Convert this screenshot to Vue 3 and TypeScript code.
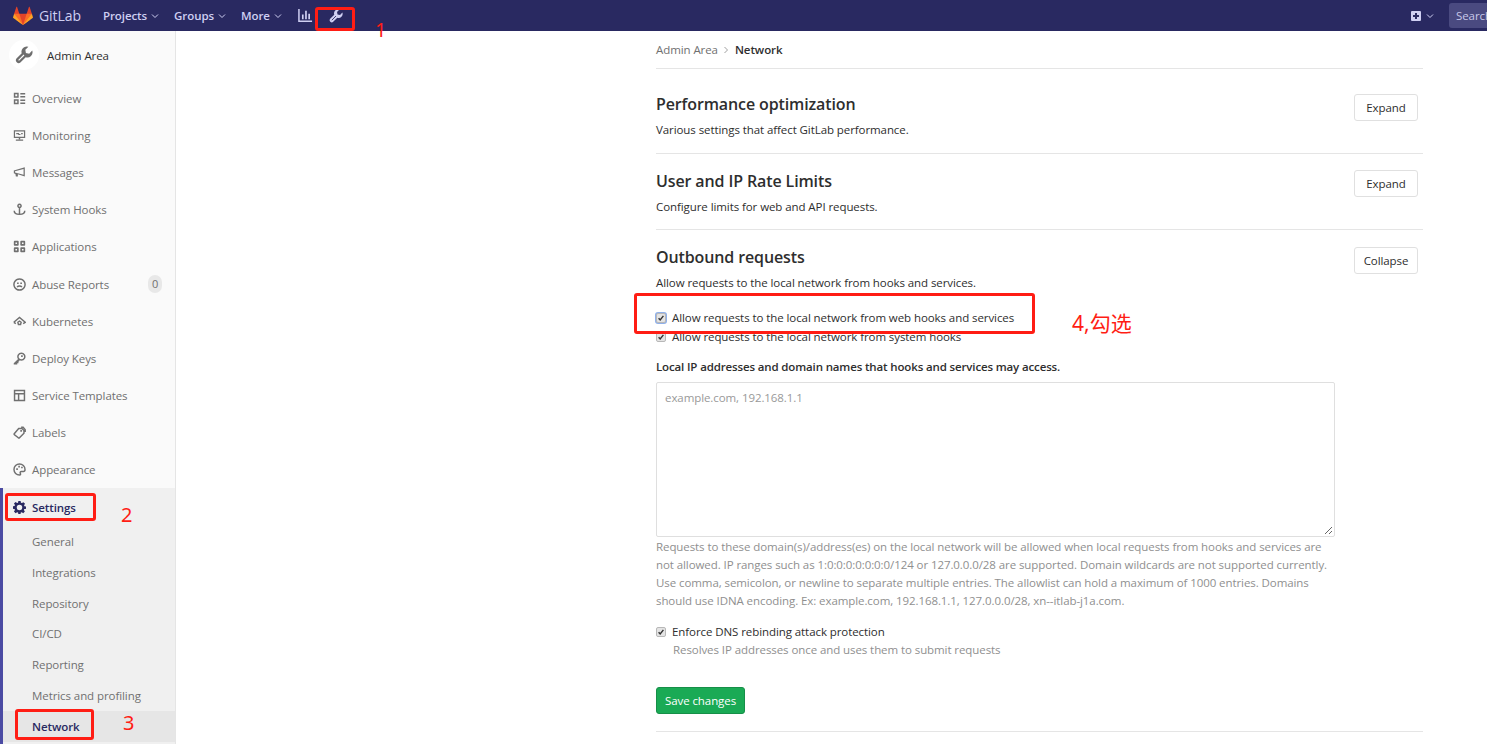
<template>
  <div class="page">
    <header class="navbar">
      <svg class="logo" viewBox="0 0 36 36">
        <path fill="#e24329" d="M2 14l9.38 9v-9l-4-12.28c-.205-.632-1.176-.632-1.38 0z" />
        <path fill="#e24329" d="M34 14l-9.38 9v-9l4-12.28c.205-.632 1.176-.632 1.38 0z" />
        <path fill="#e24329" d="M18,34.38 3,14 33,14 Z" />
        <path fill="#fc6d26" d="M18,34.38 11.38,14 2,14 6,25Z" />
        <path fill="#fc6d26" d="M18,34.38 24.62,14 34,14 30,25Z" />
        <path fill="#fca326" d="M2 14L.1 20.16c-.18.565 0 1.2.5 1.56l17.42 12.66z" />
        <path fill="#fca326" d="M34 14l1.9 6.16c.18.565 0 1.2-.5 1.56L18 34.38z" />
      </svg>
      <span class="brand">GitLab</span>
      <a v-for="item in topLinks" :key="item" class="top-link">
        {{ item }}
        <svg class="chevron" viewBox="0 0 8 6"><path d="M1 1.5l3 3 3-3" /></svg>
      </a>
      <svg class="nav-icon chart" viewBox="0 0 16 16">
        <path d="M1 1v13.2h14" fill="none" stroke="currentColor" stroke-width="1.6" />
        <path d="M4.2 7h1.8v5H4.2zM7.6 3h1.8v9H7.6zM11 6h1.8v6H11z" fill="currentColor" />
      </svg>
      <svg class="nav-icon wrench" viewBox="0 0 16 16">
        <path :d="wrench" fill="currentColor" />
        <path d="M3.2 12.800L8 8" stroke="#292961" stroke-width="1" />
      </svg>
      <div class="nav-right">
        <svg class="plus" viewBox="0 0 12 12">
          <path
            fill-rule="evenodd"
            fill="currentColor"
            d="M2 1h8a1 1 0 0 1 1 1v8a1 1 0 0 1-1 1H2a1 1 0 0 1-1-1V2a1 1 0 0 1 1-1zM5 3v2H3v2h2v2h2V7h2V5H7V3z"
          />
        </svg>
        <svg class="chevron" viewBox="0 0 8 6"><path d="M1 1.5l3 3 3-3" /></svg>
        <div class="search">Search or jump to...</div>
      </div>
    </header>

    <div class="layout">
      <aside class="sidebar">
        <div class="context">
          <span class="avatar">
            <svg viewBox="0 0 16 16">
              <path :d="wrench" fill="#6e6e6e" />
              <path d="M3.2 12.800L8 8" stroke="#fff" stroke-width="1" />
            </svg>
          </span>
          <span class="context-name">Admin Area</span>
        </div>
        <ul class="menu">
          <li v-for="item in menu" :key="item.label" class="menu-item">
            <svg class="menu-icon" viewBox="0 0 16 16">
              <path v-if="item.fill" :d="item.fill" fill="currentColor" fill-rule="evenodd" />
              <path v-if="item.stroke" :d="item.stroke" fill="none" stroke="currentColor" stroke-width="1.8" />
            </svg>
            <span>{{ item.label }}</span>
            <span v-if="item.badge" class="badge">{{ item.badge }}</span>
          </li>
        </ul>
        <div class="active-group">
          <div class="menu-item active-head">
            <svg class="menu-icon" viewBox="0 0 16 16">
              <path :d="gear" fill="currentColor" fill-rule="evenodd" />
            </svg>
            <span>Settings</span>
          </div>
          <ul class="submenu">
            <li v-for="sub in subMenu" :key="sub" :class="{ current: sub === 'Network' }">{{ sub }}</li>
          </ul>
        </div>
      </aside>

      <main class="content">
        <nav class="crumbs">
          <span>Admin Area</span>
          <svg class="crumb-sep" viewBox="0 0 6 8"><path d="M1.5 1l3 3-3 3" /></svg>
          <b>Network</b>
        </nav>

        <section v-for="s in collapsed" :key="s.title" class="block closed">
          <div class="block-head">
            <div>
              <h4>{{ s.title }}</h4>
              <p>{{ s.text }}</p>
            </div>
            <button class="btn">Expand</button>
          </div>
        </section>

        <section class="block open">
          <div class="block-head">
            <div>
              <h4>Outbound requests</h4>
              <p>Allow requests to the local network from hooks and services.</p>
            </div>
            <button class="btn">Collapse</button>
          </div>

          <label class="check first">
            <span class="box focus"><svg viewBox="0 0 10 10"><path d="M2 5.2l2 2.2 4-5" /></svg></span>
            Allow requests to the local network from web hooks and services
          </label>
          <label class="check second">
            <span class="box"><svg viewBox="0 0 10 10"><path d="M2 5.2l2 2.2 4-5" /></svg></span>
            Allow requests to the local network from system hooks
          </label>

          <div class="field-label">Local IP addresses and domain names that hooks and services may access.</div>
          <div class="textarea">
            example.com, 192.168.1.1
            <svg class="grip" viewBox="0 0 10 10"><path d="M9 2L2 9M9 6L6 9" /></svg>
          </div>
          <div class="help">
            <div v-for="line in helpLines" :key="line">{{ line }}</div>
          </div>

          <label class="check dns">
            <span class="box"><svg viewBox="0 0 10 10"><path d="M2 5.2l2 2.2 4-5" /></svg></span>
            Enforce DNS rebinding attack protection
          </label>
          <div class="dns-help">Resolves IP addresses once and uses them to submit requests</div>

          <button class="save">Save changes</button>
        </section>
      </main>
    </div>

    <!-- red marks added on top of the screenshot -->
    <i class="mark m1"></i>
    <i class="mark m2"></i>
    <i class="mark m3"></i>
    <i class="mark m4"></i>
    <span class="note n1">1</span>
    <span class="note n2">2</span>
    <span class="note n3">3</span>
    <span class="note n4">4,勾选</span>
  </div>
</template>

<script setup lang="ts">
interface MenuItem {
  label: string
  fill?: string
  stroke?: string
  badge?: string
}

const topLinks = ['Projects', 'Groups', 'More']

const wrench =
  'M15.3 4.1l-2.7 2.7-2.9-.5-.5-2.9L11.9.7A4.6 4.6 0 0 0 6 6.5l-4.7 4.7a2.5 2.5 0 0 0 3.5 3.5L9.5 10a4.6 4.6 0 0 0 5.8-5.9z'

const gear =
  'M6.6 0h2.8l.4 2.1 1.2.5L12.8 1.4l2 2-1.2 1.8.5 1.2 1.9.4v2.8l-2.1.4-.5 1.2 1.2 1.8-2 2-1.8-1.2-1.2.5-.4 2H6.6l-.4-2-1.2-.5-1.8 1.2-2-2 1.2-1.8-.5-1.2L0 9.4V6.6l1.9-.4.5-1.2-1.2-1.8 2-2L5 2.6l1.2-.5zM8 4.600a3.400 3.400 0 1 0 0 6.800 3.400 3.400 0 0 0 0-6.800z'

const menu: MenuItem[] = [
  {
    label: 'Overview',
    fill: 'M1 1h6v6H1zM2.800 2.800v2.400h2.400V2.800zM1 9h6v6H1zM2.800 10.800v2.400h2.400v-2.400zM9 1.200h6V3H9zM9 5h6v1.800H9zM9 9.200h6V11H9zM9 13h6v1.800H9z',
  },
  {
    label: 'Monitoring',
    fill: 'M1 1.500h14v9.500H1zM2.500 3v6.500h11V3zM4 5h3.500v1H10V5h2v1.500H9v1H6.500v-1H4zM3.500 13h9v1.500h-9z',
    stroke: 'M8 11v2',
  },
  {
    label: 'Messages',
    fill: 'M14.500 1.500V13L6 10v3H3.500L3 9.700 1 9V5.500zM13 3.600L2.500 6.600v1.300L13 10.900z',
  },
  {
    label: 'System Hooks',
    stroke: 'M8 5.500V14M1.500 9.500c0 3 2.500 4.500 6.500 4.500s6.500-1.500 6.500-4.500M8 1.500a2 2 0 1 0 .01 0',
  },
  {
    label: 'Applications',
    fill: 'M2 1h4a1 1 0 0 1 1 1v4a1 1 0 0 1-1 1H2a1 1 0 0 1-1-1V2a1 1 0 0 1 1-1zM3 3v2h2V3zM10 1h4a1 1 0 0 1 1 1v4a1 1 0 0 1-1 1h-4a1 1 0 0 1-1-1V2a1 1 0 0 1 1-1zM11 3v2h2V3zM2 9h4a1 1 0 0 1 1 1v4a1 1 0 0 1-1 1H2a1 1 0 0 1-1-1v-4a1 1 0 0 1 1-1zM3 11v2h2v-2zM10 9h4a1 1 0 0 1 1 1v4a1 1 0 0 1-1 1h-4a1 1 0 0 1-1-1v-4a1 1 0 0 1 1-1zM11 11v2h2v-2z',
  },
  {
    label: 'Abuse Reports',
    stroke: 'M8 1.200a6.800 6.800 0 1 0 .01 0M5 11c1.500-1.500 4.500-1.500 6 0',
    fill: 'M5 5.500h2v2H5zM9 5.500h2v2H9z',
    badge: '0',
  },
  {
    label: 'Kubernetes',
    stroke: 'M1 9l7-6 7 6-2.500 1.500M3.500 10.500L1 9',
    fill: 'M8 6.500l3 2.200-1 3.800H6l-1-3.800zM8 8.500a1 1 0 1 0 .01 0z',
  },
  {
    label: 'Deploy Keys',
    stroke: 'M10.300 1.500a4.200 4.200 0 1 0 .01 0M7.200 8.800L1.800 14.200v.3h2.500v-1.500h1.500v-1.500l1.700-1.500',
    fill: 'M10 4h2v2h-2z',
  },
  {
    label: 'Service Templates',
    fill: 'M1 1h14v14H1zM2.800 2.800v2.200h10.400V2.800zM2.800 6.800v6.400H6V6.800zM7.800 6.800v6.400h5.400V6.800z',
  },
  {
    label: 'Labels',
    stroke: 'M1.500 9.500L7 3h4l2.500 2.500v3.500L8 14.500a1 1 0 0 1-1.500 0l-5-4a1 1 0 0 1 0-1zM10 1.500h2.500l2.500 3v3',
    fill: 'M9 5h2v2H9z',
  },
  {
    label: 'Appearance',
    stroke: 'M8 1.200a6.800 6.800 0 1 0 0 13.600c1.500 0 1.500-1.200 1-2-.6-1 0-2.300 1.300-2.300h2.500c1.300 0 2-1 2-2.500 0-4-3.200-6.800-6.800-6.800z',
    fill: 'M4 6.500h2v2H4zM6.500 3.500h2v2h-2zM10 4.500h2v2h-2z',
  },
]

const subMenu = ['General', 'Integrations', 'Repository', 'CI/CD', 'Reporting', 'Metrics and profiling', 'Network']

const collapsed = [
  { title: 'Performance optimization', text: 'Various settings that affect GitLab performance.' },
  { title: 'User and IP Rate Limits', text: 'Configure limits for web and API requests.' },
]

const helpLines = [
  'Requests to these domain(s)/address(es) on the local network will be allowed when local requests from hooks and services are',
  'not allowed. IP ranges such as 1:0:0:0:0:0:0:0/124 or 127.0.0.0/28 are supported. Domain wildcards are not supported currently.',
  'Use comma, semicolon, or newline to separate multiple entries. The allowlist can hold a maximum of 1000 entries. Domains',
  'should use IDNA encoding. Ex: example.com, 192.168.1.1, 127.0.0.0/28, xn--itlab-j1a.com.',
]
</script>

<style>
html,
body {
  margin: 0;
  background: #fff;
  overflow: hidden;
}
</style>

<style scoped>
.page {
  position: relative;
  width: 1487px;
  height: 744px;
  overflow: hidden;
  font-family: "Open Sans", "Noto Sans CJK SC", sans-serif;
  font-size: 11.5px;
  letter-spacing: -0.08px;
  color: #2e2e2e;
}

/* top bar */
.navbar {
  height: 31px;
  background: #292961;
  color: #cfcff2;
  display: flex;
  align-items: center;
  padding-left: 13px;
  box-sizing: border-box;
}
.logo {
  width: 20px;
  height: 20px;
}
.brand {
  margin-left: 6px;
  width: 64px;
  font-size: 14px;
}
.top-link {
  display: flex;
  align-items: center;
  font-weight: 600;
  margin-right: 15px;
}
.chevron {
  width: 8px;
  height: 6px;
  margin-left: 4px;
  fill: none;
  stroke: #cfcff2;
  stroke-width: 1;
}
.nav-icon {
  width: 15px;
  height: 15px;
}
.chart {
  margin-left: 1px;
}
.wrench {
  width: 14px;
  height: 14px;
  margin-left: 16px;
}
.nav-right {
  margin-left: auto;
  display: flex;
  align-items: center;
}
.plus {
  width: 12px;
  height: 12px;
}
.search {
  margin-left: 15px;
  width: 31px;
  height: 25px;
  line-height: 25px;
  padding-left: 7px;
  background: #4a4a80;
  border-radius: 3px 0 0 3px;
  white-space: nowrap;
  overflow: hidden;
  color: #c8c8e8;
}

.layout {
  display: flex;
  height: 713px;
}

/* left menu */
.sidebar {
  width: 176px;
  flex: none;
  background: #fafafa;
  border-right: 1px solid #e5e5e5;
  box-sizing: border-box;
  color: #707070;
}
.context {
  height: 48px;
  display: flex;
  align-items: center;
  padding-left: 9px;
  color: #2e2e2e;
}
.avatar {
  width: 30px;
  height: 30px;
  border-radius: 50%;
  background: #fff;
  display: flex;
  align-items: center;
  justify-content: center;
  margin-right: 8px;
}
.avatar svg {
  width: 18px;
  height: 18px;
}
.context-name {
  font-weight: 500;
}
.menu {
  list-style: none;
  margin: 0;
  padding: 0;
}
.menu-item {
  height: 37.2px;
  display: flex;
  align-items: center;
  padding: 1px 13px 0;
  box-sizing: border-box;
}
.menu-icon {
  width: 13px;
  height: 13px;
  margin-right: 6px;
  flex: none;
}
.badge {
  margin-left: auto;
  width: 14px;
  height: 18px;
  line-height: 18px;
  text-align: center;
  background: #e8e8e8;
  border-radius: 7px;
  font-size: 11px;
}
.active-group {
  background: #f0f0f0;
  border-left: 3px solid #4b4ba3;
  padding-bottom: 4px;
}
.active-head {
  height: 38px;
  padding-left: 10px;
  color: #292961;
  font-weight: 600;
}
.submenu {
  list-style: none;
  margin: 0;
  padding: 0;
}
.submenu li {
  height: 30.8px;
  line-height: 32px;
  padding-left: 29px;
}
.submenu li.current {
  background: #e6e6e6;
  color: #292961;
  font-weight: 600;
}

/* main column */
.content {
  width: 767px;
  margin-left: 480px;
}
.crumbs {
  height: 37px;
  border-bottom: 1px solid #e5e5e5;
  display: flex;
  align-items: center;
  color: #707070;
}
.crumb-sep {
  width: 6px;
  height: 8px;
  margin: 0 6px 0 5px;
  fill: none;
  stroke: #a0a0a0;
}
.crumbs b {
  color: #2e2e2e;
  font-weight: 600;
}
.block {
  border-bottom: 1px solid #e5e5e5;
  box-sizing: border-box;
}
.closed {
  height: 76px;
  padding-top: 16px;
}
.closed + .closed .block-head > div {
  padding-top: 1px;
}
.closed:first-of-type {
  height: 85px;
  padding-top: 25px;
}
.open {
  height: 502px;
  padding-top: 17px;
}
.block-head {
  display: flex;
  justify-content: space-between;
  align-items: flex-start;
}
h4 {
  margin: -1px 0 0;
  font-size: 16px;
  line-height: 22px;
  font-weight: 600;
  letter-spacing: -0.12px;
  color: #2e2e2e;
}
.block-head p {
  margin: 7px 0 0;
  line-height: 16px;
}
.btn {
  width: 64px;
  height: 27px;
  margin-right: 5px;
  padding: 0;
  background: #fff;
  border: 1px solid #e0e0e0;
  border-radius: 3px;
  font: inherit;
  letter-spacing: inherit;
  color: #2e2e2e;
}
.check {
  display: flex;
  align-items: center;
  line-height: 16px;
  height: 18px;
}
.box {
  width: 8px;
  height: 8px;
  margin-right: 6px;
  background: #e4e4e4;
  border: 1px solid #b8b8b8;
  border-radius: 2px;
  display: flex;
}
.box svg {
  fill: none;
  stroke: #333;
  stroke-width: 1.8;
}
.box.focus {
  box-shadow: 0 0 0 1px #8fb0ea;
}
.first {
  margin-top: 18px;
}
.second {
  margin-top: 1px;
}
.field-label {
  margin-top: 12px;
  line-height: 18px;
  font-weight: 600;
  letter-spacing: -0.14px;
}
.textarea {
  position: relative;
  width: 679px;
  height: 155px;
  margin-top: 6px;
  padding: 7px 8px;
  border: 1px solid #dfdfdf;
  border-radius: 2px;
  box-sizing: border-box;
  color: #999;
}
.grip {
  position: absolute;
  right: 1px;
  bottom: 1px;
  width: 10px;
  height: 10px;
  fill: none;
  stroke: #666;
}
.help {
  margin-top: 1px;
  line-height: 18px;
  color: #8f8f8f;
  white-space: nowrap;
}
.dns {
  margin-top: 13px;
}
.dns-help {
  margin-left: 17px;
  line-height: 18px;
  color: #8f8f8f;
}
.save {
  display: block;
  width: 89px;
  height: 27px;
  margin-top: 28px;
  padding: 0;
  background: #1aaa55;
  border: 1px solid #168f48;
  border-radius: 3px;
  color: #fff;
  font: inherit;
  letter-spacing: inherit;
}

/* annotations */
.mark {
  position: absolute;
  border: 3px solid #ff1d14;
  border-radius: 3px;
  box-sizing: border-box;
}
.m1 {
  left: 315px;
  top: 7px;
  width: 40px;
  height: 24px;
}
.m2 {
  left: 5px;
  top: 493px;
  width: 91px;
  height: 28px;
}
.m3 {
  left: 15px;
  top: 709px;
  width: 79px;
  height: 31px;
}
.m4 {
  left: 634px;
  top: 293px;
  width: 401px;
  height: 41px;
}
.note {
  position: absolute;
  color: #ff1d14;
  font-size: 20px;
  line-height: 24px;
  letter-spacing: 0;
  font-family: "Noto Sans", "Noto Sans CJK SC", sans-serif;
}
.n1 {
  left: 375px;
  top: 18px;
}
.n2 {
  left: 121px;
  top: 503px;
}
.n3 {
  left: 123px;
  top: 711px;
}
.n4 {
  left: 1072px;
  top: 311px;
  font-size: 21px;
}
</style>
